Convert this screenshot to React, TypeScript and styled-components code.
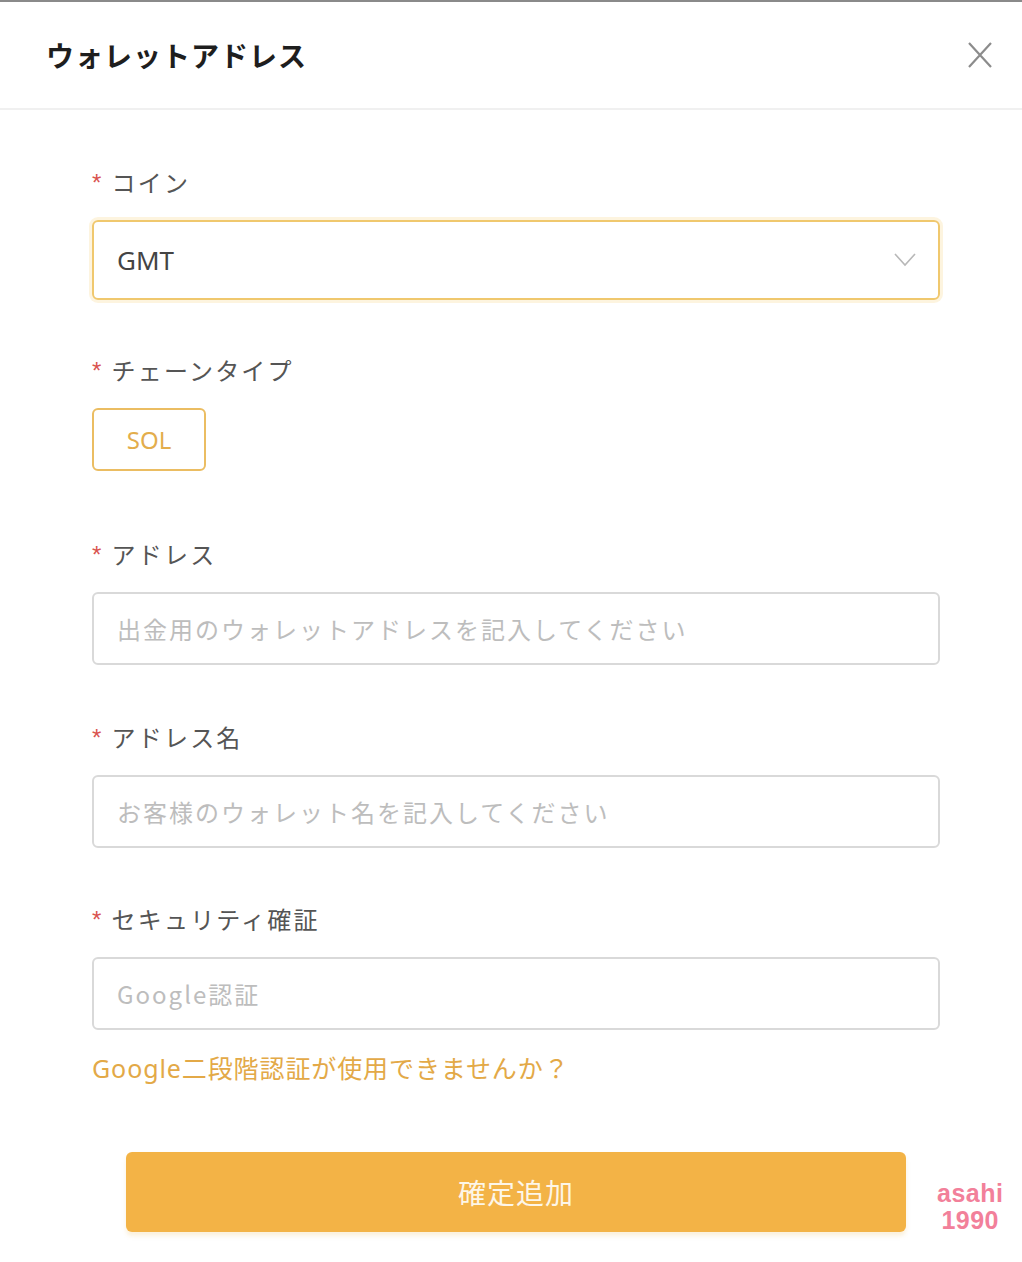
import styled, { createGlobalStyle } from 'styled-components';

const GlobalStyle = createGlobalStyle`
  html, body {
    margin: 0;
    padding: 0;
    background: #ffffff;
  }
  body {
    font-family: "Noto Sans", "Noto Sans CJK JP", sans-serif;
  }
`;

const Dialog = styled.div`
  width: 1022px;
  height: 1262px;
  box-sizing: border-box;
  border-top: 2px solid #8a8a8a;
  background: #fff;
  display: flex;
  flex-direction: column;
`;

const Header = styled.header`
  height: 108px;
  box-sizing: border-box;
  border-bottom: 2px solid #f0f0f0;
  display: flex;
  align-items: center;
  justify-content: space-between;
  padding: 0 28px 0 46px;
`;

const Title = styled.h1`
  margin: 0;
  font-family: "Noto Sans CJK JP", sans-serif;
  font-size: 28px;
  font-weight: 700;
  color: #1e1e1e;
  letter-spacing: 1px;
`;

const CloseButton = styled.button`
  border: 0;
  background: none;
  padding: 0;
  width: 28px;
  height: 28px;
  display: flex;
  align-items: center;
  justify-content: center;
  color: #8c8c8c;
  cursor: pointer;
`;

const Body = styled.div`
  padding: 53px 82px 0 92px;
  display: flex;
  flex-direction: column;
`;

const Field = styled.div<{ $gap: number }>`
  display: flex;
  flex-direction: column;
  margin-bottom: ${({ $gap }) => $gap}px;
`;

const Label = styled.label`
  height: 36px;
  display: flex;
  align-items: center;
  font-family: "Noto Sans CJK JP", sans-serif;
  font-size: 24px;
  color: #555;
  margin-bottom: 21px;
  letter-spacing: 2.2px;
`;

const Star = styled.span`
  color: #d9534f;
  font-family: "Liberation Sans", sans-serif;
  font-size: 24px;
  margin-right: 8px;
  position: relative;
  top: 2px;
`;

const SelectBox = styled.div`
  height: 80px;
  box-sizing: border-box;
  border: 2px solid #f0c86e;
  box-shadow: 0 0 0 3px rgba(246, 205, 110, 0.22);
  border-radius: 6px;
  display: flex;
  align-items: center;
  justify-content: space-between;
  padding: 0 22px 0 23px;
  font-family: "Noto Sans", sans-serif;
  font-size: 26px;
  color: #444;
`;

const Chevron = styled.span`
  display: flex;
  color: #b8b8b8;
`;

const ChainButton = styled.button`
  width: 114px;
  height: 63px;
  box-sizing: border-box;
  border: 2px solid #ebbd62;
  border-radius: 6px;
  background: #fff;
  color: #e3ad4c;
  font-family: "Noto Sans", sans-serif;
  font-size: 24px;
  padding: 0;
`;

const Input = styled.input`
  height: 73px;
  box-sizing: border-box;
  border: 2px solid #d9d9d9;
  border-radius: 6px;
  padding: 0 23px;
  font-family: "Noto Sans CJK JP", sans-serif;
  font-size: 24px;
  color: #333;
  letter-spacing: 2px;
  outline: none;
  &::placeholder {
    color: #bdbdbd;
  }
`;

const HelpLink = styled.a`
  margin-top: 20px;
  font-family: "Noto Sans", "Noto Sans CJK JP", sans-serif;
  font-size: 25px;
  letter-spacing: 0.9px;
  color: #e3a947;
  text-decoration: none;
  line-height: 36px;
`;

const Footer = styled.div`
  margin-top: 64px;
  display: flex;
  align-items: center;
  padding-left: 126px;
  gap: 31px;
`;

const Submit = styled.button`
  width: 780px;
  height: 80px;
  border: 0;
  border-radius: 6px;
  background: #f3b346;
  color: #fdf6e8;
  font-family: "Noto Sans CJK JP", sans-serif;
  font-size: 28px;
  letter-spacing: 1px;
  box-shadow: 0 4px 4px rgba(240, 200, 120, 0.25);
`;

const Watermark = styled.div`
  font-family: "Liberation Sans", sans-serif;
  font-weight: 700;
  color: #f2809a;
  font-size: 25px;
  line-height: 27px;
  letter-spacing: 0.5px;
  text-align: center;
  margin-top: 30px;
`;

const Required = ({ children }: { children: string }) => (
  <Label>
    <Star>*</Star>
    {children}
  </Label>
);

export default function App() {
  return (
    <>
      <GlobalStyle />
      <Dialog>
        <Header>
          <Title>ウォレットアドレス</Title>
          <CloseButton aria-label="close">
            <svg width="26" height="26" viewBox="0 0 26 26">
              <path d="M2 1 L24 25 M24 1 L2 25" stroke="currentColor" strokeWidth="2.2" fill="none" />
            </svg>
          </CloseButton>
        </Header>
        <Body>
          <Field $gap={51}>
            <Required>コイン</Required>
            <SelectBox>
              <span>GMT</span>
              <Chevron>
                <svg width="22" height="14" viewBox="0 0 22 14">
                  <path d="M1 1 L11 12 L21 1" stroke="currentColor" strokeWidth="1.6" fill="none" />
                </svg>
              </Chevron>
            </SelectBox>
          </Field>
          <Field $gap={64}>
            <Required>チェーンタイプ</Required>
            <div>
              <ChainButton>SOL</ChainButton>
            </div>
          </Field>
          <Field $gap={53}>
            <Required>アドレス</Required>
            <Input placeholder="出金用のウォレットアドレスを記入してください" />
          </Field>
          <Field $gap={52}>
            <Required>アドレス名</Required>
            <Input placeholder="お客様のウォレット名を記入してください" />
          </Field>
          <Field $gap={0}>
            <Required>セキュリティ確証</Required>
            <Input placeholder="Google認証" />
            <HelpLink href="#">Google二段階認証が使用できませんか？</HelpLink>
          </Field>
        </Body>
        <Footer>
          <Submit>確定追加</Submit>
          <Watermark>
            asahi
            <br />
            1990
          </Watermark>
        </Footer>
      </Dialog>
    </>
  );
}
